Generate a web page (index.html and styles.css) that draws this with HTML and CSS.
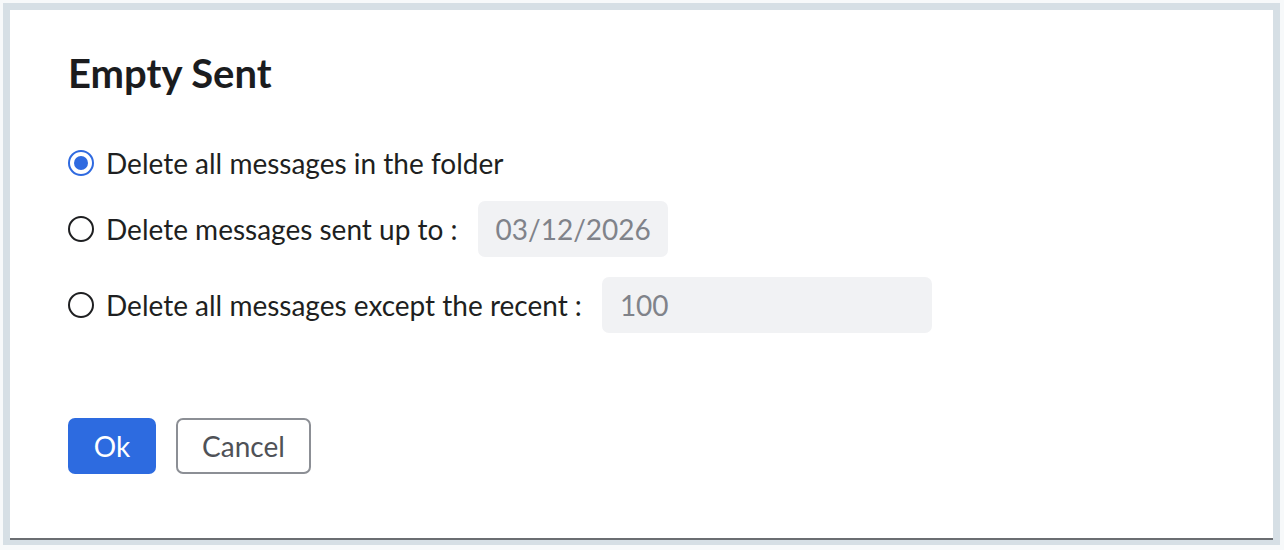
FILE: index.html
```html
<!DOCTYPE html>
<html>
<head>
<meta charset="utf-8">
<link rel="stylesheet" href="styles.css">
</head>
<body>
<div class="frame">
  <div class="dialog">
    <h1 class="title">Empty Sent</h1>
    <div class="options">
      <label class="option first">
        <span class="radio checked"></span>
        <span class="label">Delete all messages in the folder</span>
      </label>
      <label class="option">
        <span class="radio"></span>
        <span class="label">Delete messages sent up to :</span>
        <span class="field date">03/12/2026</span>
      </label>
      <label class="option">
        <span class="radio"></span>
        <span class="label">Delete all messages except the recent :</span>
        <span class="field count">100</span>
      </label>
    </div>
    <div class="actions">
      <button class="btn primary">Ok</button>
      <button class="btn secondary">Cancel</button>
    </div>
  </div>
</div>
</body>
</html>
```
FILE: styles.css
```css
html, body {
  margin: 0;
  padding: 0;
  background: #f7f9fa;
}
body {
  padding: 3px 4px 5px 3px;
  font-family: Lato, "Open Sans", sans-serif;
  color: #1e1f21;
}
.frame {
  border: 7px solid #d6dfe5;
  border-bottom-width: 5px;
  background: #d6dfe5;
}
.dialog {
  background: #fff;
  height: 530px;
  box-sizing: border-box;
  padding: 39px 0 0 58px;
  border-bottom: 2px solid #6b6e72;
}
.title {
  margin: 0;
  font-size: 40px;
  font-weight: 700;
  line-height: 48px;
  color: #1b1c1e;
}
.options {
  margin-top: 48px;
  display: flex;
  flex-direction: column;
  gap: 20px;
}
.option {
  display: flex;
  align-items: center;
  height: 56px;
  font-size: 28px;
}
.option.first {
  height: 36px;
}
.radio {
  width: 26px;
  height: 26px;
  border: 2px solid #1e1f21;
  border-radius: 50%;
  box-sizing: border-box;
  margin-right: 12px;
  flex: none;
  display: flex;
  align-items: center;
  justify-content: center;
}
.radio.checked {
  border-color: #2f6ae0;
}
.radio.checked::after {
  content: "";
  width: 14px;
  height: 14px;
  border-radius: 50%;
  background: #2f6ae0;
}
.field {
  background: #f1f2f4;
  border-radius: 7px;
  height: 56px;
  display: flex;
  align-items: center;
  padding: 0 18px;
  color: #80838a;
  box-sizing: border-box;
  margin-left: 20px;
}
.date { width: 190px; }
.count { width: 330px; }
.actions {
  margin-top: 85px;
  display: flex;
  gap: 20px;
}
.btn {
  font-family: Lato, "Open Sans", sans-serif;
  font-size: 28px;
  height: 56px;
  border-radius: 7px;
  padding: 0;
  box-sizing: border-box;
  cursor: pointer;
}
.primary {
  background: #2d6be0;
  color: #fff;
  border: none;
  width: 88px;
}
.secondary {
  background: #fff;
  color: #4f5257;
  border: 2px solid #8c8f95;
  width: 135px;
}
```
